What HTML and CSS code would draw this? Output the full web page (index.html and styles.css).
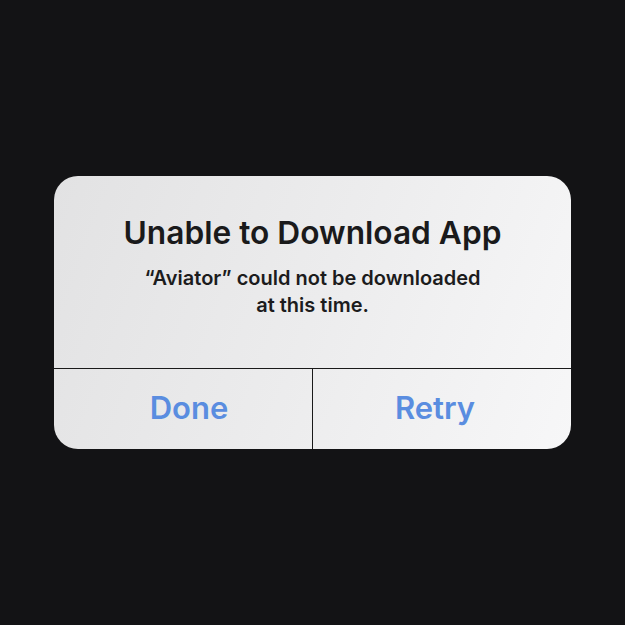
FILE: index.html
```html
<!DOCTYPE html>
<html lang="en">
<head>
  <meta charset="UTF-8" />
  <meta name="viewport" content="width=device-width, initial-scale=1.0" />
  <title>Unable to Download App</title>
  <link rel="stylesheet" href="styles.css">
</head>
<body>
  <div class="alert">
    <div class="alert-body">
      <h1 class="alert-title">Unable to Download App</h1>
      <p class="alert-text">“Aviator” could not be downloaded<br>at this time.</p>
    </div>
    <div class="alert-actions">
      <button class="action action-left">Done</button>
      <button class="action action-right">Retry</button>
    </div>
  </div>
</body>
</html>
```

FILE: styles.css
```css
html, body {
  height: 100%;
}

body {
  margin: 0;
  background: #131315;
  font-family: Inter, 'Noto Sans', sans-serif;
  display: flex;
  align-items: center;
  justify-content: center;
}

.alert {
  width: 517px;
  border-radius: 24px;
  overflow: hidden;
  background: linear-gradient(110deg, #e2e2e3 0%, #ececed 50%, #f7f7f8 100%);
}

.alert-body {
  padding: 38px 20px 49px;
  text-align: center;
}

.alert-title {
  margin: 0 0 13px;
  font-size: 31.7px;
  line-height: 38px;
  font-weight: 600;
  color: #1a1a1b;
}

.alert-text {
  margin: 0;
  font-size: 20px;
  line-height: 27px;
  font-weight: 600;
  color: #1c1c1d;
}

.alert-actions {
  display: grid;
  grid-template-columns: 259px 1fr;
  border-top: 1.5px solid #1a1a1a;
}

.action {
  height: 80px;
  border: 0;
  background: transparent;
  font-family: inherit;
  font-size: 31px;
  font-weight: 600;
  color: #5a8de0;
  padding: 0 0 4px;
}

.action-left {
  border-right: 1.5px solid #1a1a1a;
  padding-left: 12px;
}

.action-right {
  padding-right: 14px;
}
```
